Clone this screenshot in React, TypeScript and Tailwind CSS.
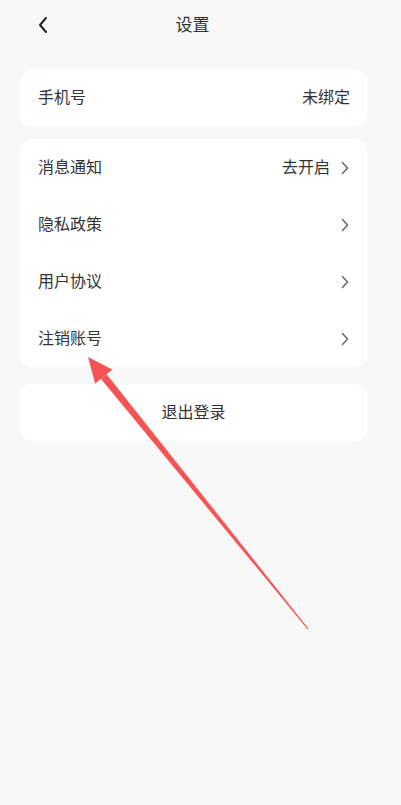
import React from "react";

const font = { fontFamily: '"Noto Sans CJK SC", "Noto Sans", sans-serif' };

const Chevron = () => (
  <svg width="10" height="16" viewBox="0 0 10 16" className="ml-[10px]">
    <path d="M2.5 2.5 L7.5 8 L2.5 13.5" fill="none" stroke="#666" strokeWidth="1.5" strokeLinecap="round" strokeLinejoin="round" />
  </svg>
);

interface RowProps {
  label: string;
  value?: string;
  arrow?: boolean;
}

const Row = ({ label, value, arrow }: RowProps) => (
  <div className="flex h-[57px] items-center justify-between pl-[18px] pr-[17px]">
    <span className="-mt-[3px] text-[16px] text-[#333]">{label}</span>
    <div className="flex items-center">
      {value && <span className="-mt-[3px] text-[16px] text-[#333]">{value}</span>}
      {arrow && <Chevron />}
    </div>
  </div>
);

export default function App() {
  return (
    <div className="relative flex h-[805px] w-[401px] overflow-hidden bg-[#f6f6f6]" style={font}>
      <div className="h-full w-[383px] bg-[#f8f8f8]">
        <div className="relative flex h-[50px] items-center justify-center">
          <svg width="12" height="18" viewBox="0 0 12 18" className="absolute left-[37px] top-[16px]">
            <path d="M9 2 L3 9 L9 16" fill="none" stroke="#222" strokeWidth="2" strokeLinecap="round" strokeLinejoin="round" />
          </svg>
          <span className="-mt-[2px] ml-[2px] text-[17px] text-[#333]">设置</span>
        </div>

        <div className="ml-5 mt-[19px] w-[347px] rounded-[12px] bg-white">
          <Row label="手机号" value="未绑定" />
        </div>

        <div className="ml-5 mt-[13px] w-[347px] rounded-[12px] bg-white">
          <Row label="消息通知" value="去开启" arrow />
          <Row label="隐私政策" arrow />
          <Row label="用户协议" arrow />
          <Row label="注销账号" arrow />
        </div>

        <div className="ml-5 mt-[17px] flex h-[57px] w-[347px] items-center justify-center rounded-[12px] bg-white">
          <span className="-mt-[3px] text-[16px] text-[#333]">退出登录</span>
        </div>
      </div>

      <svg className="pointer-events-none absolute left-0 top-0" width="401" height="805" viewBox="0 0 401 805">
        <polygon points="88,357 95.1,383.4 112.3,369.6" fill="#f55454" />
        <polygon points="100.8,378.8 106.6,374.2 308.5,628.8 307.7,629.4" fill="#f55454" />
      </svg>
    </div>
  );
}
